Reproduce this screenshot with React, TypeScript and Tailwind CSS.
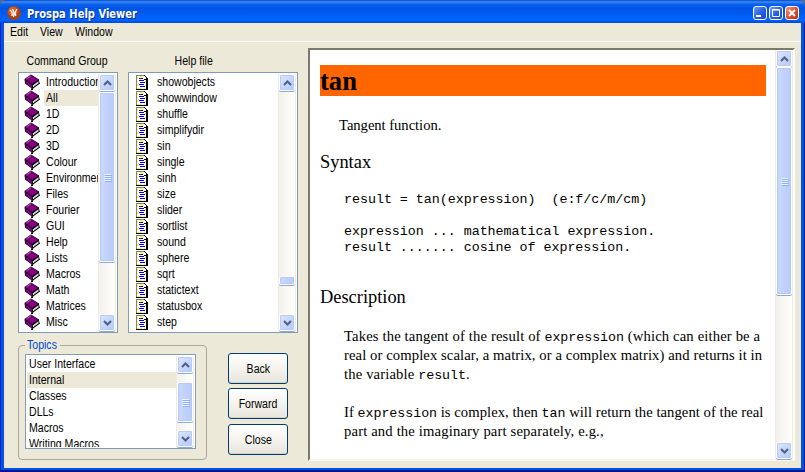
import type { ReactNode } from "react";

const commandGroups = [
  "Introduction", "All", "1D", "2D", "3D", "Colour", "Environment", "Files",
  "Fourier", "GUI", "Help", "Lists", "Macros", "Math", "Matrices", "Misc",
];

const helpFiles = [
  "showobjects", "showwindow", "shuffle", "simplifydir", "sin", "single", "sinh", "size",
  "slider", "sortlist", "sound", "sphere", "sqrt", "statictext", "statusbox", "step",
];

const topics = ["User Interface", "Internal", "Classes", "DLLs", "Macros", "Writing Macros"];

function Label({ children, center = false }: { children: ReactNode; center?: boolean }) {
  return (
    <span
      className={
        center
          ? "inline-block origin-center scale-x-[0.88] whitespace-nowrap"
          : "inline-block origin-left scale-x-[0.88] whitespace-nowrap"
      }
    >
      {children}
    </span>
  );
}

function BookIcon() {
  return (
    <svg width="17" height="16" viewBox="0 0 17 16" className="shrink-0">
      <path d="M0.5 5L7 0.5L15 5.5V7L16 9.5L8.5 15L1 9.5Z" fill="#000" />
      <path d="M1 5L7 1L14.5 5.8L8.5 10Z" fill="#800080" />
      <path d="M1 6L8 11V14L1.8 9.2Z" fill="#800080" />
      <path d="M1 5.5L8.3 10.6" stroke="#4a004a" strokeWidth="0.6" />
      <path d="M9 11.2L14.5 7.2V9.2L9 13.2Z" fill="#fff" />
      <path d="M9 12.4L14.5 8.4" stroke="#909090" strokeWidth="0.5" />
      <path d="M2.5 4.8L7 1.8" stroke="#c080c0" strokeWidth="0.8" />
      <path d="M7 14.5H9V16H7Z" fill="#000" />
    </svg>
  );
}

function PageIcon() {
  return (
    <svg width="12" height="15" viewBox="0 0 12 15" shapeRendering="crispEdges" className="shrink-0">
      <path d="M0 0H8L12 4V15H0Z" fill="#fff" />
      <path d="M0 0H8V1H1V14H0Z" fill="#808080" />
      <path d="M8 0H9V1H10V2H11V3H12V15H0V14H10V5H8Z" fill="#000" />
      <path d="M8 1H9V2H10V4H8Z" fill="#fff" />
      <path d="M1 2h1v2H1zM1 6h1v1H1zM1 9h1v2H1zM1 13h2v1H1zM4 1h2v1H4zM6 2h1v1H6zM9 6h1v2H9zM9 10h1v1H9zM4 13h2v1H4zM8 13h1v1H8zM2 8h1v1H2z" fill="#fff200" />
      <path d="M3 3h4v1H3zM3 5h5v1H3zM4 7h5v1H4zM3 9h5v1H3zM4 11h5v1H4z" fill="#0000e0" />
    </svg>
  );
}

function Arrow({ up = false }: { up?: boolean }) {
  return (
    <div className="flex h-[17px] w-4 shrink-0 items-center justify-center rounded-[2px] border border-white bg-linear-to-br from-[#dce6ff] to-[#b3c8f8] shadow-[0_1px_0_#8ba9dc,inset_0_0_0_1px_#bacbf5]">
      <svg width="9" height="6" viewBox="0 0 9 6">
        <path d={up ? "M1 5L4.5 1.5L8 5" : "M1 1L4.5 4.5L8 1"} fill="none" stroke="#4d6185" strokeWidth="2" />
      </svg>
    </div>
  );
}

function Thumb({ className, grip = true }: { className: string; grip?: boolean }) {
  return (
    <div
      className={`${className} flex w-4 shrink-0 flex-col items-center justify-center rounded-[2px] border border-white bg-linear-to-r from-[#c9d8fd] to-[#b9cbf8] shadow-[0_1px_0_#8ba9dc,inset_0_0_0_1px_#b6c9f5]`}
    >
      {grip && (
        <div className="flex flex-col gap-px">
          {[0, 1, 2, 3].map((n) => (
            <div key={n} className="h-px w-[7px] bg-[#eef4fe] shadow-[1px_1px_0_#8cb0f8]" />
          ))}
        </div>
      )}
    </div>
  );
}

function ScrollBar({ children }: { children: ReactNode }) {
  return (
    <div className="flex w-[18px] shrink-0 flex-col items-center border-x border-[#eeede5] bg-linear-to-r from-[#f3f1ec] to-[#fefefb]">
      <Arrow up />
      <div className="flex min-h-0 w-4 flex-1 flex-col">{children}</div>
      <Arrow />
    </div>
  );
}

function PushButton({ children }: { children: ReactNode }) {
  return (
    <button className="flex h-[31px] w-[60px] items-center justify-center rounded-[3px] border border-[#003c74] bg-linear-to-b from-white via-[#f4f3ee] to-[#e7e5dc] shadow-[inset_0_-1px_0_#d6d0c5]">
      <Label center>{children}</Label>
    </button>
  );
}

function TitleButton({ close = false, children }: { close?: boolean; children: ReactNode }) {
  return (
    <div
      className={
        close
          ? "flex h-[14px] w-[14px] items-center justify-center rounded-[3px] border border-white bg-linear-to-br from-[#f09878] via-[#e25030] to-[#b83010]"
          : "flex h-[14px] w-[14px] items-center justify-center rounded-[3px] border border-white bg-linear-to-br from-[#6c9cf4] via-[#2c62e0] to-[#1848c8]"
      }
    >
      <svg width="12" height="12" viewBox="0 0 12 12" fill="none" stroke="#fff" className="shrink-0">
        {children}
      </svg>
    </div>
  );
}

function TitleBar() {
  return (
    <div className="flex h-[23px] shrink-0 items-center rounded-t-[6px] bg-[linear-gradient(to_bottom,#0842c8_0%,#3a8cf8_8%,#0b62ee_18%,#0054e3_35%,#0060fa_75%,#0064ff_88%,#0046d0_100%)] pr-[6px] pl-[7px]">
      <svg width="14" height="14" viewBox="0 0 14 14" className="mt-[3px]">
        <circle cx="7" cy="7" r="7" fill="#a84018" />
        <circle cx="6" cy="5.5" r="4.8" fill="#d0602c" />
        <path d="M3 4Q6 6 5 10M5.5 3Q8 7 6.5 11M10 3Q7 7 9 10" stroke="#fff" strokeWidth="1.2" fill="none" />
      </svg>
      <div className="ml-[6px] flex-1 pt-[4px] font-['DejaVu_Sans',sans-serif] text-[12px] leading-[18px] font-bold text-white [text-shadow:1px_1px_0_#0a2c90]">
        <span className="inline-block origin-left scale-x-[0.83] whitespace-nowrap">Prospa Help Viewer</span>
      </div>
      <div className="flex gap-[2px] pt-[3px]">
        <TitleButton>
          <path d="M2 9H7" strokeWidth="2" />
        </TitleButton>
        <TitleButton>
          <path d="M2.5 2.5H9.5V9.5H2.5ZM2 3H10" />
        </TitleButton>
        <TitleButton close>
          <path d="M3 3L9 9M9 3L3 9" strokeWidth="2" />
        </TitleButton>
      </div>
    </div>
  );
}

function Code({ children }: { children: ReactNode }) {
  return (
    <code className="font-['Liberation_Mono',monospace] text-[13.33px] leading-none tracking-[-0.05px]">{children}</code>
  );
}

function HelpDocument() {
  return (
    <div className="flex h-[413px] w-[487px] border-2 border-t-[#7d7a6c] border-r-[#fffffb] border-b-[#f8f7ef] border-l-[#7d7a6c] bg-white">
      <div className="min-w-0 flex-1 overflow-hidden pt-[15px] pl-[10px] font-['Liberation_Serif',serif] text-[14.67px] leading-[19px] whitespace-nowrap">
        <h1 className="h-[31px] w-[446px] bg-[#ff6600] text-[26.6px] leading-[32px] font-bold">tan</h1>
        <p className="mt-5 pl-[19px] tracking-[-0.05px]">Tangent function.</p>
        <h2 className="mt-[15px] text-[18.4px] leading-[24px]">Syntax</h2>
        <pre className="mt-[18px] pl-6 font-['Liberation_Mono',monospace] text-[13.33px] leading-4 tracking-[-0.02px]">
          {"result = tan(expression)  (e:f/c/m/cm)\n\nexpression ... mathematical expression.\nresult ....... cosine of expression."}
        </pre>
        <h2 className="mt-[29px] text-[18.4px] leading-[24px]">Description</h2>
        <p className="mt-[18px] pl-6">
          <span className="tracking-[0.14px]">Takes the tangent of the result of <Code>expression</Code> (which can either be a</span><br />
          <span className="tracking-[0.09px]">real or complex scalar, a matrix, or a complex matrix) and returns it in</span><br />
          <span className="tracking-[0.14px]">the variable <Code>result</Code>.</span>
        </p>
        <p className="mt-[19px] pl-6">
          <span className="tracking-[0.04px]">If <Code>expression</Code> is complex, then <Code>tan</Code> will return the tangent of the real</span><br />
          <span className="tracking-[0.15px]">part and the imaginary part separately, e.g.,</span>
        </p>
      </div>
      <ScrollBar>
        <Thumb className="h-[228px]" />
      </ScrollBar>
    </div>
  );
}

export default function App() {
  return (
    <div className="flex h-[472px] w-[805px] flex-col overflow-hidden bg-[#5c6880] font-['Liberation_Sans',sans-serif] text-[12px] leading-4 text-black">
      <TitleBar />
      <div className="flex min-h-0 flex-1 flex-col border border-b-2 border-t-0 border-l-[#0026c8] border-r-[#001a90] border-b-[#001690]">
      <div className="flex min-h-0 flex-1 flex-col border-x-3 border-b-2 border-[#0650e6] bg-[#ece9d8]">
        <div className="flex h-[19px] shrink-0 border-b border-white pt-px">
          <div className="w-[36px] pl-[6px]"><Label>Edit</Label></div>
          <div className="w-[35px]"><Label>View</Label></div>
          <div><Label>Window</Label></div>
        </div>
        <div className="flex pt-[6px] pl-[14px]">
          <div className="w-[290px]">
            <div className="flex h-6 pt-[5px]">
              <div className="w-[98px] text-center"><Label center>Command Group</Label></div>
              <div className="w-[156px] text-center"><Label center>Help file</Label></div>
            </div>
            <div className="flex gap-[10px]">
              <div className="flex h-[261px] w-[100px] border border-[#7f9db9] bg-white p-px">
                <ul className="min-w-0 flex-1 overflow-hidden">
                  {commandGroups.map((name) => (
                    <li key={name} className="flex h-4 pl-1">
                      <BookIcon />
                      <div
                        className={
                          name === "All"
                            ? "ml-[3px] min-w-0 flex-1 bg-[#ece9d8] pl-[2px]"
                            : "ml-[3px] min-w-0 flex-1 pl-[2px]"
                        }
                      >
                        <Label>{name}</Label>
                      </div>
                    </li>
                  ))}
                </ul>
                <ScrollBar>
                  <Thumb className="mt-px h-[170px]" />
                </ScrollBar>
              </div>
              <div className="flex h-[261px] w-[170px] border border-[#7f9db9] bg-white p-px">
                <ul className="min-w-0 flex-1 overflow-hidden">
                  {helpFiles.map((name) => (
                    <li key={name} className="flex h-4 items-center pl-[6px]">
                      <PageIcon />
                      <div className="ml-[9px]"><Label>{name}</Label></div>
                    </li>
                  ))}
                </ul>
                <ScrollBar>
                  <Thumb className="mt-[185px] h-[9px]" grip={false} />
                </ScrollBar>
              </div>
            </div>
            <div className="mt-1 flex">
              <fieldset className="h-[123px] w-[189px] rounded-[4px] border border-[#aca899] pl-[6px]">
                <legend className="w-[35px] pl-[2px] text-[#0046d5]"><Label>Topics</Label></legend>
                <div className="mt-px flex h-[95px] w-[171px] border border-[#7f9db9] bg-white p-px">
                  <ul className="min-w-0 flex-1 overflow-hidden">
                    {topics.map((name) => (
                      <li key={name} className={name === "Internal" ? "h-4 bg-[#ece9d8] pl-[2px]" : "h-4 pl-[2px]"}>
                        <Label>{name}</Label>
                      </li>
                    ))}
                  </ul>
                  <ScrollBar>
                    <Thumb className="mt-[9px] h-10" />
                  </ScrollBar>
                </div>
              </fieldset>
              <div className="ml-[21px] flex flex-col pt-4">
                <PushButton>Back</PushButton>
                <div className="mt-1 mb-[5px] flex"><PushButton>Forward</PushButton></div>
                <PushButton>Close</PushButton>
              </div>
            </div>
          </div>
          <HelpDocument />
        </div>
      </div>
      </div>
    </div>
  );
}
